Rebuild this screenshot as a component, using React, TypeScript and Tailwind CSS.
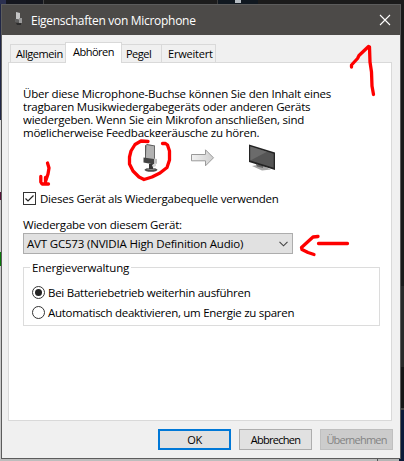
import type { ReactNode } from "react"

const paragraph = [
  { text: "Über diese Microphone-Buchse können Sie den Inhalt eines", className: "tracking-[-0.2px]" },
  { text: "tragbaren Musikwiedergabegeräts oder anderen Geräts", className: "tracking-[-0.22px]" },
  { text: "wiedergeben. Wenn Sie ein Mikrofon anschließen, sind", className: "tracking-[-0.22px]" },
  { text: "möglicherweise Feedbackgeräusche zu hören.", className: "tracking-[-0.24px]" },
]

function Tab({ className, children }: { className: string; children: ReactNode }) {
  return (
    <div className={`box-border whitespace-nowrap border border-[#d9d9d9] border-b-0 text-[11px] ${className}`}>
      {children}
    </div>
  )
}

function Radio({ checked = false }: { checked?: boolean }) {
  return (
    <div className="flex h-[13px] w-[13px] shrink-0 items-center justify-center rounded-full border border-[#333] bg-white">
      {checked && <div className="h-[7px] w-[7px] rounded-full bg-[#222]" />}
    </div>
  )
}

function TitleIcon() {
  return (
    <svg width="10" height="16" viewBox="0 0 10 16">
      <path d="M2 0L6 1V8L2 7Z" fill="#c4c4c4" />
      <path d="M1 7L7 8V11L1 10Z" fill="#5f5f5f" />
      <path d="M5 6H8V11H5Z" fill="#999" />
      <path d="M2 11L7 11V13H3Z" fill="#2c2c2c" />
    </svg>
  )
}

function MicIcon() {
  return (
    <svg width="18" height="32" viewBox="0 0 18 32">
      <ellipse cx="9" cy="25.8" rx="6.5" ry="2" fill="#4c4c4c" />
      <ellipse cx="9" cy="24.8" rx="4.5" ry="1.1" fill="#8a8a8a" />
      <path d="M7 20H11V25H7Z" fill="#333" />
      <path d="M3 1.5L5 0L13 1.5V16H3Z" fill="#5a5a5a" />
      <path d="M4.4 1L12.2 2.2V16H3.8Z" fill="#b2b2b2" />
      <path d="M1.5 13.5L12 15V20.5L1.5 18.5Z" fill="#444" />
      <path d="M12 14.5L15 15V19.5L12 21Z" fill="#bdbdbd" />
      <path d="M10 21L14 19V22L11 23.5Z" fill="#d8d8d8" />
    </svg>
  )
}

function ArrowIcon() {
  return (
    <svg width="26" height="20" viewBox="0 0 26 20">
      <defs>
        <linearGradient id="arrow" x1="0" y1="0" x2="1" y2="0">
          <stop offset="0" stopColor="#f2f2f2" />
          <stop offset="1" stopColor="#cfcfcf" />
        </linearGradient>
      </defs>
      <path d="M1.5 7.5H15.5V2.8L23.5 10.8L15.5 18.8V13.8H1.5Z" fill="url(#arrow)" stroke="#9a9a9a" />
    </svg>
  )
}

function MonitorIcon() {
  return (
    <svg width="28" height="28" viewBox="0 0 28 28">
      <path d="M4 22L12 20.5L23 25.5L14 26.5Z" fill="#a5a5a5" />
      <path d="M8 20L15 22V24L9 22.5Z" fill="#666" />
      <path d="M1 0.5L27 8.5V26L1 18Z" fill="#242424" />
      <path d="M2.3 2.6L25.7 9.8V23.8L2.3 16.6Z" fill="#555" />
      <path d="M2.3 2.6L19 7.8L2.3 16.6Z" fill="#6b6b6b" />
    </svg>
  )
}

// Hand-drawn red pen marks lying over the dialog
function PenMarks() {
  return (
    <svg
      className="pointer-events-none absolute left-0 top-0 z-20"
      width="404"
      height="461"
      viewBox="0 0 404 461"
      fill="none"
      stroke="#fe0000"
      strokeWidth="3.3"
      strokeLinecap="round"
      strokeLinejoin="round"
    >
      <path d="M351.5 67V65L357.5 58.5L359 55.5L368.5 46.5L369.5 47L370 62L371.5 72L372 86L373.5 94.5" />
      <path d="M148 141.5L141 141L135 144.5L131 151L129.5 157V164L133 171L139 177L144 179.5L152 177L160 173L167 167.5L169.5 160V151L167.5 145L165.5 143.5H162.5" />
      <path d="M47.5 163L49 168L48 174L45.5 181.5M40.8 176.5V182L42 184H48.5M45.5 177.5V183" />
      <path d="M318 236.5L313 237L301.5 247.5L302 249.5L308 252.5L314 254.5M318.5 243.5H347.5" />
    </svg>
  )
}

export default function App() {
  return (
    <div className="relative flex h-[461px] w-[404px] flex-col overflow-hidden bg-[#1b1b1b] font-['Open_Sans','Noto_Sans',sans-serif] text-[11.5px] leading-[13px] text-black">
      <div className="flex h-1 shrink-0">
        <div className="w-1.5 bg-[#2b3050]" />
        <div className="w-[37px] bg-[#15171f]" />
        <div className="w-px bg-[#444]" />
        <div className="w-[173px] bg-[#1c1c1c]" />
        <div className="w-px bg-[#3c3c3c]" />
        <div className="flex w-10 justify-center bg-[#101820]">
          <div className="h-[3px] w-1.5 bg-[#b5bcc2]" />
        </div>
      </div>

      <div className="flex h-[455px] shrink-0">
        <div className="flex w-px shrink-0 flex-col">
          <div className="h-[116px] bg-[#202646]" />
          <div className="h-[72px] bg-[#dcdcdc]" />
          <div className="h-2 bg-[#561038]" />
          <div className="h-[52px] bg-[#c9c9c9]" />
          <div className="h-[14px] bg-[#087808]" />
          <div className="grow bg-[#c9c9c9]" />
        </div>

        <div className="flex w-[400px] shrink-0 flex-col border border-[#5c5c5c] bg-[#f0f0f0]">
          <div className="flex h-[30px] shrink-0 items-center bg-[#4c4a48] pl-3 text-[12px] text-white">
            <TitleIcon />
            <span className="ml-[7px] whitespace-nowrap tracking-[-0.29px]">Eigenschaften von Microphone</span>
            <svg className="ml-auto mr-[9px]" width="12" height="12" viewBox="0 0 12 12">
              <path d="M1 1L11 11M11 1L1 11" stroke="#fff" strokeWidth="1.1" />
            </svg>
          </div>

          <div className="flex h-[27px] shrink-0 items-end pl-2">
            <Tab className="h-[18px] w-[55px] border-r-0 pl-[5px] pt-[2px] tracking-[-0.42px]">Allgemein</Tab>
            <Tab className="z-10 -mb-px h-[21px] w-[57px] bg-white pl-[7px] pt-[2px] tracking-[-0.5px]">Abhören</Tab>
            <Tab className="h-[18px] w-10 border-l-0 pl-1 pt-[2px] tracking-[-0.5px]">Pegel</Tab>
            <Tab className="h-[18px] w-[54px] border-l-0 pl-[6px] pt-[2px] tracking-[-0.2px]">Erweitert</Tab>
          </div>

          <div className="ml-1.5 flex h-[359px] w-[384px] shrink-0 flex-col border border-[#d9d9d9] bg-white pl-[14px] pt-6">
            <div className="h-[50px] shrink-0 overflow-hidden">
              {paragraph.map((line) => (
                <p key={line.text} className={`whitespace-nowrap ${line.className}`}>
                  {line.text}
                </p>
              ))}
            </div>

            <div className="flex h-[55px] shrink-0 items-start pl-[119px] pt-[7px]">
              <MicIcon />
              <div className="ml-[30px] mt-[3px]">
                <ArrowIcon />
              </div>
              <div className="ml-8">
                <MonitorIcon />
              </div>
            </div>

            <div className="flex h-[13px] shrink-0 items-center gap-1">
              <div className="h-[13px] w-[13px] shrink-0 border border-[#333] bg-white">
                <svg width="11" height="11" viewBox="0 0 11 11">
                  <path d="M1.5 5.5L4 8L9.5 2.5" fill="none" stroke="#222" strokeWidth="1.2" />
                </svg>
              </div>
              <span className="whitespace-nowrap tracking-[-0.24px]">Dieses Gerät als Wiedergabequelle verwenden</span>
            </div>

            <div className="mt-[13px] h-[15px] shrink-0 whitespace-nowrap tracking-[-0.22px]">
              Wiedergabe von diesem Gerät:
            </div>
            <div className="flex h-[21px] w-[270px] shrink-0 items-center border border-[#adadad] bg-[#e1e1e1] pl-[3px] pr-1">
              <span className="whitespace-nowrap tracking-[-0.18px]">AVT GC573 (NVIDIA High Definition Audio)</span>
              <svg className="ml-auto" width="9" height="6" viewBox="0 0 9 6">
                <path d="M0.5 0.8L4.5 4.8L8.5 0.8" fill="none" stroke="#444" strokeWidth="1.1" />
              </svg>
            </div>

            <fieldset className="mt-[7px] flex h-[65px] w-[357px] shrink-0 flex-col border border-[#dcdcdc] pl-2">
              <legend className="ml-[-2px] whitespace-nowrap px-[2px] tracking-[-0.15px]">Energieverwaltung</legend>
              <div className="mt-3 flex h-[13px] items-center gap-[3px]">
                <Radio checked />
                <span className="whitespace-nowrap tracking-[-0.26px]">Bei Batteriebetrieb weiterhin ausführen</span>
              </div>
              <div className="mt-[7px] flex h-[13px] items-center gap-[3px]">
                <Radio />
                <span className="whitespace-nowrap tracking-[-0.28px]">Automatisch deaktivieren, um Energie zu sparen</span>
              </div>
            </fieldset>
          </div>

          <div className="mt-2 flex gap-2 pl-[156px] text-[11px] tracking-[-0.4px]">
            <button className="h-[21px] w-[73px] border-2 border-[#0078d7] bg-[#e1e1e1]">OK</button>
            <button className="h-[21px] w-[73px] border border-[#adadad] bg-[#e1e1e1] tracking-[-0.7px]">
              Abbrechen
            </button>
            <button className="h-[21px] w-[73px] border border-[#bfbfbf] bg-[#cccccc] tracking-[-0.8px] text-[#838383]">
              Übernehmen
            </button>
          </div>
        </div>

        <div className="flex grow flex-col">
          <div className="h-[282px] bg-[#1a1a1a]" />
          <div className="h-[81px] bg-[#292929]" />
          <div className="h-[41px] bg-[#151515]" />
          <div className="h-[2px] bg-[#444]" />
          <div className="grow bg-[#0a1a38]" />
        </div>
      </div>

      <div className="flex h-[2px] shrink-0">
        <div className="w-[377px] bg-[#bdbdbd]" />
        <div className="w-px bg-[#555]" />
        <div className="w-[21px] bg-[#b5b5b5]" />
        <div className="grow bg-[#0a1a38]" />
      </div>

      <PenMarks />
    </div>
  )
}
